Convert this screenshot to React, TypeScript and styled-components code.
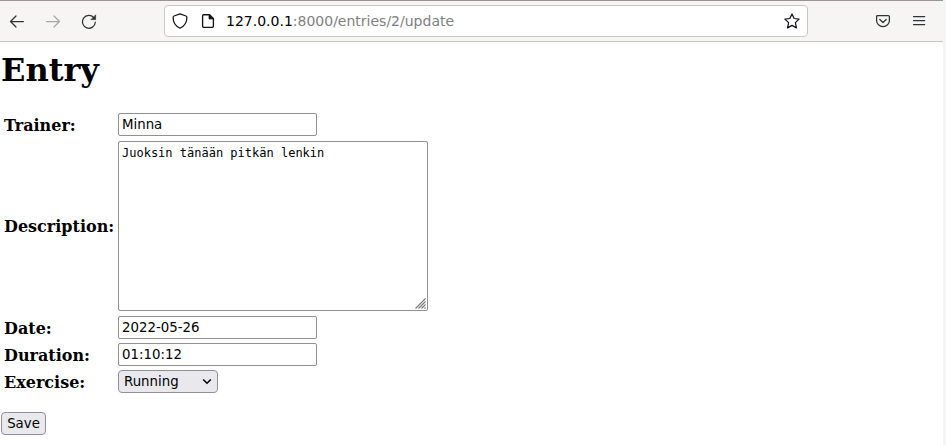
import React from "react";
import styled, { createGlobalStyle, css } from "styled-components";

const GlobalStyle = createGlobalStyle`
  html, body { margin: 0; padding: 0; background: #fff; overflow: hidden; }
  * { box-sizing: border-box; }
`;

const Screen = styled.div`
  display: flex;
  width: 946px;
  height: 445px;
  background: #f5f5f5;
`;

const Browser = styled.div`
  width: 943px;
  height: 445px;
  display: flex;
  flex-direction: column;
  background: #fff;
`;

const Toolbar = styled.header`
  display: flex;
  align-items: center;
  flex: none;
  height: 42px;
  border-top: 1px solid #989594;
  border-bottom: 1px solid #c9c7c4;
  background: #f6f5f4;
  padding: 0 16px 0 9px;
  color: #2e3436;
`;

const ToolButton = styled.span<{ $gap: number; $faded?: boolean }>`
  display: flex;
  width: 16px;
  height: 16px;
  margin-right: ${(p) => p.$gap}px;
  opacity: ${(p) => (p.$faded ? 0.4 : 1)};
`;

const AddressBar = styled.div`
  display: flex;
  align-items: center;
  width: 644px;
  height: 32px;
  margin-right: 67px;
  padding: 0 7px;
  border: 1px solid #cdc7c2;
  border-radius: 4px;
  background: #fff;
  color: #15141a;
`;

const Url = styled.div`
  flex: 1;
  font: 14px/20px "DejaVu Sans", sans-serif;
  color: #808080;
  white-space: nowrap;
`;

const Host = styled.span`
  color: #000;
`;

const Page = styled.main`
  padding: 9px 1px 0;
  color: #000;
`;

const Title = styled.h1`
  margin: 0 0 24px;
  font: bold 32px/38px "DejaVu Serif", serif;
`;

const Row = styled.div<{ $gap: number }>`
  display: flex;
  align-items: center;
  margin-bottom: ${(p) => p.$gap}px;
`;

const Label = styled.label`
  width: 117px;
  padding: 1px 0 0 3px;
  font: bold 16px/19px "DejaVu Serif", serif;
`;

const control = css`
  display: block;
  margin: 0;
  height: 23px;
  border: 1px solid #8f8f9d;
  color: #000;
  font: 13.333px/17px "DejaVu Sans", sans-serif;
  outline: none;
`;

const TextInput = styled.input`
  ${control}
  width: 199px;
  padding: 1px 3px 2px;
  border-radius: 2px;
  background: #fff;
`;

const AreaFrame = styled.div`
  position: relative;
  width: 310px;
  height: 170px;
`;

const TextArea = styled.textarea`
  display: block;
  width: 310px;
  height: 170px;
  margin: 0;
  padding: 4px 3px;
  border: 1px solid #8f8f9d;
  border-radius: 2px;
  outline: none;
  resize: none;
  background: #fff;
  color: #000;
  font: 12px/15px "DejaVu Sans Mono", monospace;
`;

const Grip = styled.svg`
  position: absolute;
  right: 2px;
  bottom: 2px;
`;

const SelectBox = styled.button`
  ${control}
  display: flex;
  align-items: center;
  justify-content: space-between;
  width: 100px;
  padding: 0 5px 1px;
  border-radius: 4px;
  background: #e9e9ed;
`;

const SaveButton = styled.button`
  ${control}
  width: 45px;
  margin-top: 19px;
  padding: 0 0 1px;
  border-radius: 4px;
  background: #e9e9ed;
`;

const strokeProps = {
  width: 16,
  height: 16,
  viewBox: "0 0 16 16",
  fill: "none",
  stroke: "currentColor",
  strokeWidth: 1.25,
  strokeLinecap: "round" as const,
  strokeLinejoin: "round" as const,
};

const BackIcon = () => (
  <svg {...strokeProps}><path d="M14.4 8.5H1.7M7 3 1.5 8.5 7 14" /></svg>
);
const ForwardIcon = () => (
  <svg {...strokeProps}><path d="M1.6 8.5h12.7M9 3l5.5 5.5L9 14" /></svg>
);
const ReloadIcon = () => (
  <svg {...strokeProps}>
    <path d="M14.3 9.2A6.4 6.4 0 1 1 12.8 4.7" />
    <path d="M14.6 2.2v4.4h-4.4Z" fill="currentColor" strokeWidth={0.7} />
  </svg>
);
const ShieldIcon = () => (
  <svg {...strokeProps}>
    <path d="M8 .8 14 3c.7.3.9.7.9 1.3C14.9 9.7 11.8 13.5 8 15.2 4.2 13.5 1.1 9.7 1.1 4.3 1.1 3.7 1.3 3.3 2 3Z" />
  </svg>
);
const PageIcon = () => (
  <svg {...strokeProps} strokeWidth={1.35}>
    <path d="M3.7 1.7H9.5L13.4 5.6V13.2Q13.4 14.3 12.3 14.3H3.7Q2.6 14.3 2.6 13.2V2.8Q2.6 1.7 3.7 1.7Z" />
    <path d="M9 1.5v4.500h4.500Z" fill="currentColor" strokeWidth={0.7} />
  </svg>
);
const StarIcon = () => (
  <svg {...strokeProps}>
    <path d="m8 .9 2.1 4.600 5 .6-3.700 3.500 1 5.300L8 12.400l-4.400 2.500 1-5.300L.9 6.100l5-.6Z" />
  </svg>
);
const PocketIcon = () => (
  <svg {...strokeProps}>
    <path d="M2.7 2.500H13.300Q14.400 2.500 14.400 3.600V7.500A6.400 6 0 0 1 1.600 7.500V3.600Q1.600 2.500 2.700 2.500Z" />
    <path d="M4.800 6.500 8 9.500l3.200-3" />
  </svg>
);
const MenuIcon = () => (
  <svg {...strokeProps}><path d="M2.500 3.500h11.200M2.500 7.500h11.200M2.500 11.500h11.200" /></svg>
);

export default function App() {
  return (
    <Screen>
      <GlobalStyle />
      <Browser>
        <Toolbar>
          <ToolButton $gap={20}><BackIcon /></ToolButton>
          <ToolButton $gap={20} $faded><ForwardIcon /></ToolButton>
          <ToolButton $gap={67}><ReloadIcon /></ToolButton>
          <AddressBar>
            <ToolButton $gap={12}><ShieldIcon /></ToolButton>
            <ToolButton $gap={10}><PageIcon /></ToolButton>
            <Url><Host>127.0.0.1</Host>:8000/entries/2/update</Url>
            <ToolButton $gap={0}><StarIcon /></ToolButton>
          </AddressBar>
          <ToolButton $gap={20}><PocketIcon /></ToolButton>
          <ToolButton $gap={0}><MenuIcon /></ToolButton>
        </Toolbar>
        <Page>
          <Title>Entry</Title>
          <Row $gap={5}>
            <Label htmlFor="trainer">Trainer:</Label>
            <TextInput id="trainer" defaultValue="Minna" />
          </Row>
          <Row $gap={5}>
            <Label htmlFor="description">Description:</Label>
            <AreaFrame>
              <TextArea id="description" spellCheck={false} defaultValue="Juoksin tänään pitkän lenkin" />
              <Grip width="11" height="11" viewBox="0 0 11 11" stroke="#777" strokeWidth="1.1" fill="none">
                <path d="M.5 10.500l10-10M3.500 10.500l7-7M6.500 10.500l4-4M9.500 10.500l1-1" />
              </Grip>
            </AreaFrame>
          </Row>
          <Row $gap={4}>
            <Label htmlFor="date">Date:</Label>
            <TextInput id="date" defaultValue="2022-05-26" />
          </Row>
          <Row $gap={4}>
            <Label htmlFor="duration">Duration:</Label>
            <TextInput id="duration" defaultValue="01:10:12" />
          </Row>
          <Row $gap={0}>
            <Label htmlFor="exercise">Exercise:</Label>
            <SelectBox id="exercise" type="button">
              Running
              <svg width="10" height="10" viewBox="0 0 10 10" fill="none" stroke="#000" strokeWidth="1.500">
                <path d="M1.200 3.500 5 7.300l3.800-3.800" />
              </svg>
            </SelectBox>
          </Row>
          <SaveButton type="button">Save</SaveButton>
        </Page>
      </Browser>
    </Screen>
  );
}
